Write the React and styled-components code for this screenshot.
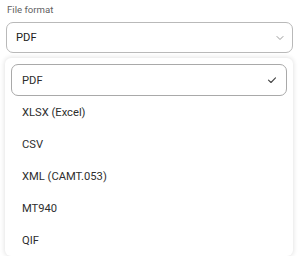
import styled, { createGlobalStyle } from 'styled-components'

const GlobalStyle = createGlobalStyle`
  html, body {
    margin: 0;
    padding: 0;
    background: #ffffff;
    font-family: Roboto, "Liberation Sans", sans-serif;
    overflow: hidden;
  }
`

const Field = styled.div`
  padding: 4px 7px 0 6px;
  display: flex;
  flex-direction: column;
`

const Label = styled.div`
  font-size: 9.6px;
  line-height: 12px;
  color: #5f5f5f;
  padding-left: 1px;
  margin-bottom: 6px;
`

const Trigger = styled.div`
  height: 31px;
  box-sizing: border-box;
  border: 1px solid #b9b9b9;
  border-radius: 7px;
  display: flex;
  align-items: center;
  justify-content: space-between;
  padding: 0 7px 0 9px;
  font-size: 11.2px;
  color: #222;
  background: #fff;
`

const Panel = styled.div`
  margin: 5px 7px 0 5px;
  padding: 6px 6px 0 6px;
  background: #fff;
  border-radius: 6px;
  box-shadow: 0 0 4px 1px rgba(0, 0, 0, 0.1);
  display: flex;
  flex-direction: column;
`

const Option = styled.div`
  height: 32px;
  box-sizing: border-box;
  display: flex;
  align-items: center;
  justify-content: space-between;
  padding: 0 9px 0 10px;
  font-size: 11.2px;
  color: #2e2e2e;
  border-radius: 7px;
  border: 1px solid ${(p) => (p.$selected ? '#a9a9a9' : 'transparent')};
`

const Chevron = () => (
  <svg width="10" height="10" viewBox="0 0 10 10" fill="none">
    <path d="M2 3.5 L5 6.5 L8 3.5" stroke="#9a9a9a" strokeWidth="1" strokeLinecap="round" strokeLinejoin="round" />
  </svg>
)

const Check = () => (
  <svg width="10" height="10" viewBox="0 0 10 10" fill="none">
    <path d="M1.5 5.2 L4 7.5 L8.5 2.8" stroke="#444" strokeWidth="1.1" strokeLinecap="round" strokeLinejoin="round" />
  </svg>
)

const options = ['PDF', 'XLSX (Excel)', 'CSV', 'XML (CAMT.053)', 'MT940', 'QIF']

export default function App() {
  const selected = 'PDF'
  return (
    <>
      <GlobalStyle />
      <Field>
        <Label>File format</Label>
        <Trigger>
          <span>{selected}</span>
          <Chevron />
        </Trigger>
      </Field>
      <Panel>
        {options.map((o) => (
          <Option key={o} $selected={o === selected}>
            <span>{o}</span>
            {o === selected && <Check />}
          </Option>
        ))}
      </Panel>
    </>
  )
}
